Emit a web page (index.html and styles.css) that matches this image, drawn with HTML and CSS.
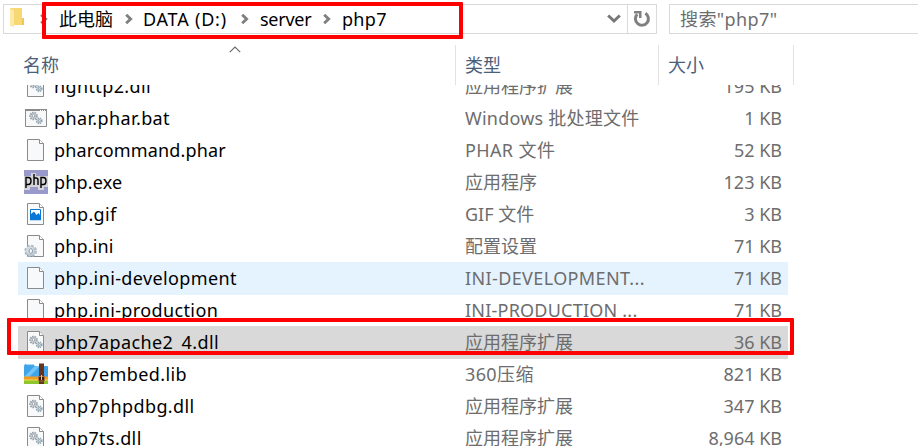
FILE: index.html
```html
<!DOCTYPE html>
<html lang="zh-CN">
<head>
<meta charset="utf-8">
<title>php7</title>
<link rel="stylesheet" href="styles.css">
</head>
<body>
<svg class="defs" width="0" height="0">
  <defs>
    <symbol id="page" viewBox="0 0 24 24">
      <path d="M3.5 1.5H15.5L19.5 5.5V22.5H3.5Z" fill="#f8f9fa" stroke="#8b8b8b"/>
      <path d="M15.5 1.5V5.5H19.5" fill="#fff" stroke="#8b8b8b"/>
    </symbol>
    <symbol id="gears" viewBox="0 0 24 24">
      <circle cx="9.5" cy="10" r="3.3" fill="#d9dfe3" stroke="#9aa2a8" stroke-width="2" stroke-dasharray="1.5 .8"/>
      <circle cx="9.5" cy="10" r="1.4" fill="#fff" stroke="#8b969e" stroke-width=".9"/>
      <circle cx="15.2" cy="14.8" r="2.5" fill="#d9e8ef" stroke="#93a6b1" stroke-width="1.8" stroke-dasharray="1.3 .7"/>
      <circle cx="15.2" cy="14.8" r="1.1" fill="#fff" stroke="#869aa6" stroke-width=".8"/>
    </symbol>
    <symbol id="dll" viewBox="0 0 24 24"><use href="#page"/><use href="#gears"/></symbol>
    <symbol id="bat" viewBox="0 0 24 24">
      <path d="M1.5 3.5H22.5V20.5H1.5Z" fill="#f7f8f8" stroke="#8b8b8b"/>
      <path d="M1 4H23" stroke="#8b8b8b" stroke-width="2"/>
      <path d="M16 4.5H21" stroke="#fff" stroke-dasharray="1 1"/>
      <use href="#gears"/>
    </symbol>
    <symbol id="php" viewBox="0 0 24 24">
      <path d="M0 0H24V24H0Z" fill="#9999cc"/>
      <path d="M0 6H7V3H12V6H24V17H20V20H14V17H6V20H0Z" fill="#d5d5d9"/>
      <path d="M2 18V7.5H4.5Q7 7.5 7 11T4.5 14.5H2M10 4V15M10 8H12Q14 8 14 10V15M17 18V7.5H19.5Q22 7.5 22 11T19.5 14.5H17" fill="none" stroke="#000" stroke-width="1.4"/>
    </symbol>
    <symbol id="gif" viewBox="0 0 24 24">
      <use href="#page"/>
      <path d="M6.5 7.5H16.5V17.5H6.5Z" fill="#fff" stroke="#0878d7"/>
      <path d="M7 16V12L10 9.5L12.5 13L14.5 11L16 13V17H7Z" fill="#0878d7"/>
      <path d="M6 17.5H17" stroke="#0878d7" stroke-width="1.5"/>
    </symbol>
    <symbol id="ini" viewBox="0 0 24 24">
      <use href="#page"/>
      <circle cx="6.6" cy="17" r="5" fill="#c5d0d8" stroke="#a9b6bf" stroke-width="2.6" stroke-dasharray="2.4 1.5"/>
      <circle cx="6.6" cy="17" r="4.9" fill="#bcc8d0"/>
      <circle cx="6" cy="16.2" r="3.8" fill="#d3dce2"/>
      <ellipse cx="6.8" cy="17" rx="1.7" ry="2.4" fill="#fff" stroke="#899aa6"/>
    </symbol>
    <symbol id="zip" viewBox="0 0 24 24">
      <path d="M0 15V4L1 2H9L11 4H23Q24 4 24 5V15Z" fill="#3fa5ea"/>
      <path d="M0 15L11 4H16L5 15Z" fill="#74c4f6"/>
      <path d="M2 2.5H9" stroke="#a7dcfa"/>
      <path d="M0 14.5H24V18H0Z" fill="#f29a24"/>
      <path d="M0 18H24V22H0Z" fill="#8fc62d"/>
      <path d="M0 18H24" stroke="#f6e04c"/>
      <path d="M15 1.5H20V22H15Z" fill="#67331e"/>
      <path d="M14.5 14.5H20.5V19H14.5Z" fill="#3d1c12" stroke="#a9713a"/>
      <path d="M17.5 13V18" stroke="#f5c468"/>
    </symbol>
    <symbol id="chevron" viewBox="0 0 8 10"><path d="M1.2 .8L5.6 5L1.2 9.2" fill="none" stroke="#808080" stroke-width="2.9"/></symbol>
  </defs>
</svg>

<div class="window">
  <div class="toolbar">
    <div class="address">
      <svg class="folder" viewBox="0 0 16 20"><path d="M1 0H13V10L15 12V17H5L1 18Z" fill="#f8d775"/><path d="M1 0L5 3V20L1 17Z" fill="#ffe9a8"/><path d="M13 10H15V17H13Z" fill="#eec65d"/></svg>
      <svg class="sep s0"><use href="#chevron"/></svg>
      <span class="crumb c1">此电脑</span>
      <svg class="sep"><use href="#chevron"/></svg>
      <span class="crumb c2">DATA (D:)</span>
      <svg class="sep"><use href="#chevron"/></svg>
      <span class="crumb c3">server</span>
      <svg class="sep"><use href="#chevron"/></svg>
      <span class="crumb c4">php7</span>
      <svg class="drop" viewBox="0 0 14 10"><path d="M1.2 1.5L7 7L12.8 1.5" fill="none" stroke="#777" stroke-width="3"/></svg>
      <div class="refresh"><svg viewBox="0 0 18 18"><path d="M12.4 3.2A6.5 6.5 0 1 1 4.2 4.2" fill="none" stroke="#808080" stroke-width="3"/><path d="M1 1H8.5V8H6V3.5H1Z" fill="#808080"/></svg></div>
    </div>
    <div class="search">搜索"php7"</div>
  </div>

  <div class="head">
    <div class="h name">名称</div>
    <div class="h type">类型</div>
    <div class="h size">大小</div>
    <svg class="sort" viewBox="0 0 12 7"><path d="M.8 6.2L6 1L11.2 6.2" fill="none" stroke="#666" stroke-width="1.1"/></svg>
  </div>

  <div class="list">
    <div class="row"><svg class="icon"><use href="#dll"/></svg><span class="file">nghttp2.dll</span><span class="kind">应用程序扩展</span><span class="kb">195 KB</span></div>
    <div class="row"><svg class="icon"><use href="#bat"/></svg><span class="file">phar.phar.bat</span><span class="kind wide">Windows 批处理文件</span><span class="kb">1 KB</span></div>
    <div class="row"><svg class="icon"><use href="#page"/></svg><span class="file snug">pharcommand.phar</span><span class="kind wider">PHAR 文件</span><span class="kb">52 KB</span></div>
    <div class="row"><svg class="icon"><use href="#php"/></svg><span class="file snug">php.exe</span><span class="kind">应用程序</span><span class="kb">123 KB</span></div>
    <div class="row"><svg class="icon"><use href="#gif"/></svg><span class="file">php.gif</span><span class="kind">GIF 文件</span><span class="kb">3 KB</span></div>
    <div class="row"><svg class="icon"><use href="#ini"/></svg><span class="file snug">php.ini</span><span class="kind">配置设置</span><span class="kb">71 KB</span></div>
    <div class="row hover"><svg class="icon"><use href="#page"/></svg><span class="file">php.ini-development</span><span class="kind wider">INI-DEVELOPMENT...</span><span class="kb">71 KB</span></div>
    <div class="row"><svg class="icon"><use href="#page"/></svg><span class="file">php.ini-production</span><span class="kind wide">INI-PRODUCTION ...</span><span class="kb">71 KB</span></div>
    <div class="row selected"><svg class="icon"><use href="#dll"/></svg><span class="file">php7apache2_4.dll</span><span class="kind">应用程序扩展</span><span class="kb">36 KB</span></div>
    <div class="row"><svg class="icon"><use href="#zip"/></svg><span class="file">php7embed.lib</span><span class="kind wider">360压缩</span><span class="kb">821 KB</span></div>
    <div class="row"><svg class="icon"><use href="#dll"/></svg><span class="file">php7phpdbg.dll</span><span class="kind">应用程序扩展</span><span class="kb">347 KB</span></div>
    <div class="row"><svg class="icon"><use href="#dll"/></svg><span class="file">php7ts.dll</span><span class="kind">应用程序扩展</span><span class="kb">8,964 KB</span></div>
  </div>

  <div class="mark mark-path"></div>
  <div class="mark mark-file"></div>
</div>
</body>
</html>
```
FILE: styles.css
```css
* { box-sizing: border-box; }
body {
  margin: 0;
  background: #fff;
  font-family: "Noto Sans", "Noto Sans CJK SC", sans-serif;
  font-size: 18px;
  font-weight: 400;
  color: #000;
}
.defs { position: absolute; }
.window {
  position: relative;
  width: 918px;
  height: 446px;
  overflow: hidden;
  display: flex;
  flex-direction: column;
}
.toolbar { display: flex; gap: 12px; padding: 4px 0 0 3px; height: 45px; flex: none; }
.address {
  display: flex;
  align-items: center;
  width: 654px;
  height: 30px;
  border: 1px solid #d9d9d9;
  flex: none;
  line-height: 28px;
  white-space: nowrap;
}
.folder { width: 16px; height: 20px; margin-left: 5px; margin-top: -3px; flex: none; }
.sep { width: 8px; height: 10px; flex: none; }
.s0 { margin-left: 15px; }
.crumb { flex: none; margin-left: 11px; }
.c1 { width: 66px; margin-left: 11px; }
.c2 { width: 98px; margin-left: 10px; letter-spacing: .8px; }
.c3 { width: 63px; letter-spacing: -.25px; }
.c4 { letter-spacing: .3px; }
.drop { width: 14px; height: 10px; margin-left: auto; margin-right: 6px; flex: none; }
.refresh { width: 29px; height: 28px; border-left: 1px solid #d9d9d9; display: flex; align-items: center; justify-content: center; }
.refresh svg { width: 18px; height: 18px; }
.search { width: 260px; height: 30px; flex: none; border: 1px solid #d9d9d9; padding-left: 10px; line-height: 28px; color: #6d6d6d; letter-spacing: .4px; }
.head { display: flex; position: relative; height: 40px; flex: none; color: #4c607a; line-height: 41px; }
.h { border-right: 1px solid #e2e2e2; }
.name { width: 456px; padding-left: 23px; }
.type { width: 203px; padding-left: 9px; }
.size { width: 135px; padding-left: 9px; }
.sort { position: absolute; left: 229px; top: 1px; width: 12px; height: 7px; }
.list { height: 361px; overflow: hidden; padding-left: 18px; }
.row { display: flex; align-items: center; width: 770px; height: 32px; padding: 0 6px; line-height: 32px; white-space: nowrap; }
.row:first-child { margin-top: -15px; }
.hover { background: #e5f3ff; box-shadow: 0 1px #e5f3ff; }
.selected { background: #d9d9d9; box-shadow: 0 1px #d9d9d9; }
.icon { width: 24px; height: 24px; margin-right: 6px; flex: none; }
.file { width: 411px; letter-spacing: .38px; }
.snug { letter-spacing: .15px; }
.kind { flex: 1; color: #6d6d6d; }
.wide { letter-spacing: .22px; }
.wider { letter-spacing: .38px; }
.kb { color: #6d6d6d; }
.mark { position: absolute; border: 4px solid #f00; border-radius: 1px; }
.mark-path { left: 42px; top: 2px; width: 421px; height: 37px; }
.mark-file { left: 7px; top: 318px; width: 787px; height: 37px; }
```
